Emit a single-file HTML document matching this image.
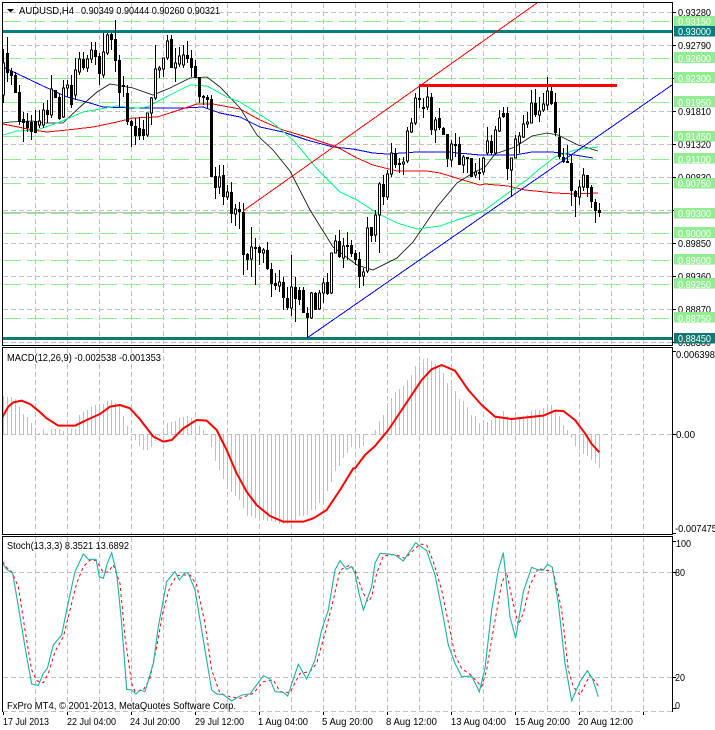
<!DOCTYPE html>
<html lang="en"><head><meta charset="utf-8"><title>AUDUSD,H4</title>
<style>
html,body{margin:0;padding:0;background:#fff;width:715px;height:730px;overflow:hidden}
svg{display:block}
text{font-family:"Liberation Sans",sans-serif;font-size:10.5px;fill:#000}
.w{fill:#fff}
.c{shape-rendering:crispEdges}
</style></head><body>
<svg width="715" height="730" viewBox="0 0 715 730" xmlns="http://www.w3.org/2000/svg">
<rect width="715" height="730" fill="#fff"/>
<!-- vertical grid -->
<path class="c" fill="none" stroke="#c0c0c0" stroke-dasharray="5 3" d="M35.5 3V345M67.5 3V345M99.5 3V345M131.5 3V345M163.5 3V345M195.5 3V345M227.5 3V345M259.5 3V345M291.5 3V345M323.5 3V345M355.5 3V345M387.5 3V345M419.5 3V345M451.5 3V345M483.5 3V345M515.5 3V345M547.5 3V345M579.5 3V345M611.5 3V345M643.5 3V345
M35.5 348V534M67.5 348V534M99.5 348V534M131.5 348V534M163.5 348V534M195.5 348V534M227.5 348V534M259.5 348V534M291.5 348V534M323.5 348V534M355.5 348V534M387.5 348V534M419.5 348V534M451.5 348V534M483.5 348V534M515.5 348V534M547.5 348V534M579.5 348V534M611.5 348V534M643.5 348V534
M35.5 537V712M67.5 537V712M99.5 537V712M131.5 537V712M163.5 537V712M195.5 537V712M227.5 537V712M259.5 537V712M291.5 537V712M323.5 537V712M355.5 537V712M387.5 537V712M419.5 537V712M451.5 537V712M483.5 537V712M515.5 537V712M547.5 537V712M579.5 537V712M611.5 537V712M643.5 537V712"/>
<!-- horizontal grid -->
<path class="c" fill="none" stroke="#c0c0c0" stroke-dasharray="5 3" d="M3 12.5H672M3 45.5H672M3 78.5H672M3 111.5H672M3 144.5H672M3 177.5H672M3 210.5H672M3 243.5H672M3 276.5H672M3 309.5H672M3 342.5H672M3 434.5H672M3 572.5H672M3 677.5H672M3 711.5H672"/>
<path class="c" fill="none" stroke="#bdbdbd" d="M3 212.5H672"/>
<!-- green levels -->
<path class="c" fill="none" stroke="#90ee90" stroke-dasharray="18 6" d="M3 21.5H672M3 58.5H672M3 78.5H672M3 102.5H672M3 136.5H672M3 159.5H672M3 183.5H672M3 213.5H672M3 233.5H672M3 260.5H672M3 284.5H672M3 318.5H672"/>
<!-- teal levels -->
<rect x="3" y="30" width="669" height="3" fill="#008080"/>
<rect x="3" y="337" width="669" height="3" fill="#0f7a72"/>
<!-- moving averages -->
<g fill="none">
<polyline class="c" stroke="#00f" stroke-width="1" points="3,67 20,75 43,86 67,97 90,103 103,107 133,108 183,108 203,107 220,113 240,117 260,127 283,132 307,140 333,147 353,149 373,153 387,154 417,152 447,152 480,155 515,155 532,152 552,152 575,155 593,158"/>
<polyline class="c" stroke="#f00" stroke-width="1" points="3,124 33,130 47,132 67,130 93,127 117,122 133,118 157,117 173,112 197,104 213,104 240,109 260,120 283,130 307,137 337,147 357,158 373,165 397,171 427,171 440,173 463,180 480,185 485,184 508,186 525,190 555,193 575,194 598,193"/>
<polyline stroke="#111" stroke-width=".85" points="3,123 10,122 33,121 43,123 63,123 80,107 97,92 110,84 133,88 153,95 170,88 190,78 207,77 220,87 240,108 257,135 273,150 290,171 310,210 333,247 357,265 373,270 397,258 413,242 437,207 457,183 473,173 485,167 495,154 515,147 532,136 547,133 558,135 578,145 598,151"/>
<polyline class="c" stroke="#00fa80" stroke-width="1" points="3,135 17,131 37,130 60,122 83,112 117,106 137,108 147,107 170,95 190,85 207,86 227,97 240,102 273,123 293,140 310,160 318,170 340,192 357,200 377,213 397,223 417,229 440,226 457,220 478,213 485,210 508,193 528,179 538,170 555,157 575,150 598,147"/>
</g>
<!-- candles -->
<path class="c" fill="none" stroke="#000" d="M3.5 49V103M7.5 37V82M11.5 68V85M15.5 72V93M19.5 85V125M23.5 112V142M27.5 113V132M31.5 115V140M35.5 110V133M39.5 110V128M43.5 103V128M47.5 100V123M51.5 75V118M55.5 90V98M59.5 93V120M63.5 80V118M67.5 80V97M71.5 75V108M75.5 58V100M79.5 52V75M83.5 52V70M87.5 55V72M91.5 42V63M95.5 42V65M99.5 53V85M103.5 33V78M107.5 33V55M111.5 33V50M115.5 20V72M119.5 55V107M123.5 76V97M127.5 85V125M131.5 120V147M135.5 118V145M139.5 117V140M143.5 120V140M147.5 113V137M151.5 97V125M155.5 45V100M159.5 66V78M163.5 58V77M167.5 35V60M171.5 35V68M175.5 48V82M179.5 47V67M183.5 45V68M187.5 41V63M191.5 50V77M195.5 60V78M199.5 77V103M203.5 95V105M207.5 95V108M211.5 95V177M215.5 167V199M219.5 165V194M223.5 165V205M227.5 185V200M231.5 182V223M235.5 204V226M239.5 202V229M243.5 203V275M247.5 253V270M251.5 227V277M255.5 238V285M259.5 246V265M263.5 248V263M267.5 242V270M271.5 263V297M275.5 273V290M279.5 270V292M283.5 277V310M287.5 287V310M291.5 255V316M295.5 277V322M299.5 287V305M303.5 287V313M307.5 307V338M311.5 292V319M315.5 292V310M319.5 290V310M323.5 278V303M327.5 273V295M331.5 253V294M335.5 235V253M339.5 230V258M343.5 238V268M347.5 232V260M351.5 240V257M355.5 250V265M359.5 252V288M363.5 268V286M367.5 217V273M371.5 227V242M375.5 210V242M379.5 182V253M383.5 175V205M387.5 170V200M391.5 143V177M395.5 148V168M399.5 158V173M403.5 157V175M407.5 127V163M411.5 118V133M415.5 93V125M419.5 85V108M423.5 98V118M427.5 85V110M431.5 93V135M435.5 117V143M439.5 108V130M443.5 127V135M447.5 134V167M451.5 140V167M455.5 133V157M459.5 137V165M463.5 155V173M467.5 157V173M471.5 158V177M475.5 163V178M479.5 158V180M483.5 157V175M487.5 127V155M491.5 135V155M495.5 126V155M499.5 110V132M503.5 107V118M507.5 107V180M511.5 158V197M515.5 135V158M519.5 132V153M523.5 115V138M527.5 112V128M531.5 90V123M535.5 89V117M539.5 97V122M543.5 93V112M547.5 77V110M551.5 86V105M555.5 93V136M559.5 128V159M563.5 148V163M567.5 145V163M571.5 155V206M575.5 190V217M579.5 180V205M583.5 168V191M587.5 175V197M591.5 185V208M595.5 199V223M599.5 203V217"/>
<path class="c" fill="#fff" stroke="#000" d="M2.5 63h2v32h-2zM38.5 121h2v4h-2zM42.5 110h2v15h-2zM50.5 89h2v26h-2zM62.5 88h2v29h-2zM66.5 85h2v3h-2zM74.5 70h2v25h-2zM78.5 59h2v13h-2zM86.5 59h2v9h-2zM90.5 50h2v9h-2zM102.5 52h2v23h-2zM106.5 35h2v18h-2zM146.5 113h2v22h-2zM150.5 98h2v15h-2zM154.5 69h2v29h-2zM158.5 68h2v2h-2zM162.5 58h2v11h-2zM166.5 41h2v17h-2zM174.5 63h2v5h-2zM178.5 56h2v8h-2zM182.5 55h2v10h-2zM218.5 177h2v10h-2zM226.5 192h2v5h-2zM234.5 209h2v5h-2zM250.5 247h2v12h-2zM262.5 250h2v3h-2zM278.5 282h2v4h-2zM290.5 287h2v21h-2zM310.5 293h2v25h-2zM318.5 293h2v16h-2zM322.5 283h2v10h-2zM330.5 253h2v40h-2zM334.5 241h2v12h-2zM342.5 246h2v12h-2zM362.5 272h2v4h-2zM366.5 228h2v43h-2zM374.5 215h2v20h-2zM378.5 184h2v31h-2zM386.5 174h2v23h-2zM390.5 153h2v21h-2zM402.5 162h2v2h-2zM406.5 131h2v30h-2zM410.5 123h2v9h-2zM414.5 98h2v25h-2zM426.5 97h2v10h-2zM434.5 120h2v10h-2zM450.5 144h2v16h-2zM462.5 157h2v8h-2zM474.5 172h2v3h-2zM482.5 158h2v14h-2zM486.5 141h2v12h-2zM494.5 130h2v23h-2zM498.5 118h2v13h-2zM510.5 158h2v12h-2zM514.5 139h2v19h-2zM518.5 136h2v7h-2zM522.5 124h2v13h-2zM526.5 122h2v2h-2zM530.5 103h2v20h-2zM538.5 111h2v4h-2zM542.5 104h2v6h-2zM546.5 91h2v14h-2zM578.5 187h2v10h-2zM582.5 175h2v12h-2z"/>
<path class="c" fill="none" stroke="#000" stroke-width="3" d="M7.5 53V73M11.5 71V76M15.5 75V93M19.5 92V122M23.5 119V123M27.5 121V128M31.5 122V132M35.5 121V133M47.5 110V115M55.5 90V98M59.5 97V119M71.5 85V105M83.5 59V68M95.5 50V57M99.5 56V74M111.5 34V40M115.5 39V61M119.5 60V93M123.5 85V87M127.5 93V122M131.5 121V126M135.5 126V136M139.5 128V136M143.5 129V136M171.5 39V68M187.5 55V59M191.5 58V68M195.5 66V78M199.5 77V97M203.5 96V98M207.5 97V100M211.5 99V177M215.5 176V188M223.5 175V197M231.5 192V214M239.5 209V212M243.5 212V255M247.5 254V260M255.5 247V249M259.5 247V253M267.5 250V269M271.5 269V284M275.5 283V286M283.5 282V298M287.5 298V308M295.5 287V299M299.5 290V300M303.5 290V313M307.5 313V318M315.5 293V310M327.5 282V294M339.5 241V257M347.5 245V247M351.5 245V254M355.5 253V260M359.5 259V277M371.5 227V236M383.5 184V197M395.5 153V165M399.5 163V165M419.5 98V100M423.5 107V109M431.5 97V130M439.5 118V128M443.5 128V135M447.5 134V159M455.5 144V146M459.5 144V165M467.5 157V159M471.5 158V177M479.5 172V174M491.5 141V153M503.5 113V117M507.5 113V169M535.5 103V115M551.5 91V104M555.5 102V133M559.5 137V157M563.5 157V162M567.5 161V163M571.5 163V191M575.5 191V197M587.5 175V188M591.5 187V202M595.5 202V211M599.5 210V213"/>
<!-- trend objects -->
<path class="c" fill="none" stroke="#f00" d="M243 211L537 3"/>
<path class="c" fill="none" stroke="#00f" d="M307 338L672 85"/>
<rect x="419" y="84" width="198" height="3" fill="#f00"/>
<!-- MACD histogram -->
<path class="c" fill="none" stroke="#c0c0c0" d="M3.5 434v-38M7.5 434v-37M11.5 434v-37M15.5 434v-35M19.5 434v-27M23.5 434v-20M27.5 434v-17M31.5 434v-11M35.5 434v-6M39.5 434v-1M43.5 434v-5M47.5 434v-1M51.5 434v-5M55.5 434v-5M59.5 434v-5M63.5 434v-3M67.5 434v-4M71.5 434v-5M75.5 434v-5M79.5 434v-19M83.5 434v-22M87.5 434v-24M91.5 434v-27M95.5 434v-29M99.5 434v-29M103.5 434v-30M107.5 434v-33M111.5 434v-34M115.5 434v-31M119.5 434v-28M123.5 434v-18M127.5 434v-8M135.5 434v6M139.5 434v12M143.5 434v16M147.5 434v16M151.5 434v13M155.5 434v7M159.5 434v2M163.5 434v-2M167.5 434v-11M171.5 434v-12M175.5 434v-13M179.5 434v-16M183.5 434v-17M187.5 434v-18M191.5 434v-16M195.5 434v-14M199.5 434v-8M203.5 434v-4M211.5 434v13M215.5 434v27M219.5 434v36M223.5 434v45M227.5 434v50M231.5 434v58M235.5 434v62M239.5 434v66M243.5 434v74M247.5 434v82M251.5 434v82M255.5 434v84M259.5 434v86M263.5 434v86M267.5 434v87M271.5 434v87M275.5 434v88M279.5 434v90M283.5 434v90M287.5 434v90M291.5 434v89M295.5 434v86M299.5 434v82M303.5 434v82M307.5 434v81M311.5 434v76M315.5 434v76M319.5 434v69M323.5 434v66M327.5 434v57M331.5 434v48M335.5 434v37M339.5 434v32M343.5 434v24M347.5 434v19M351.5 434v13M355.5 434v15M359.5 434v14M363.5 434v12M367.5 434v1M375.5 434v-4M379.5 434v-13M383.5 434v-19M387.5 434v-31M391.5 434v-36M395.5 434v-42M399.5 434v-45M403.5 434v-48M407.5 434v-54M411.5 434v-59M415.5 434v-68M419.5 434v-72M423.5 434v-75M427.5 434v-76M431.5 434v-73M435.5 434v-70M439.5 434v-66M443.5 434v-61M447.5 434v-51M451.5 434v-48M455.5 434v-43M459.5 434v-35M463.5 434v-33M467.5 434v-27M471.5 434v-19M475.5 434v-18M479.5 434v-11M483.5 434v-12M487.5 434v-12M491.5 434v-14M495.5 434v-18M499.5 434v-18M503.5 434v-23M507.5 434v-18M511.5 434v-14M515.5 434v-14M519.5 434v-16M523.5 434v-18M527.5 434v-19M531.5 434v-23M535.5 434v-24M539.5 434v-24M543.5 434v-26M547.5 434v-28M551.5 434v-29M555.5 434v-23M559.5 434v-18M563.5 434v-9M567.5 434v-4M571.5 434v4M575.5 434v12M579.5 434v17M583.5 434v20M587.5 434v22M591.5 434v26M595.5 434v29M599.5 434v34"/>
<!-- MACD signal -->
<g transform="translate(0,340) scale(.33333)" fill="none" stroke="#f00" stroke-width="6" stroke-linejoin="round">
<polyline points="8,230 25,200 40,187 65,182 90,192 115,212 140,235 175,257 225,257 260,240 300,222 330,200 360,195 390,205 420,238 460,290 490,305 515,300 550,265 590,240 620,242 650,270 680,330 710,400 740,455 770,495 810,528 850,545 910,545 940,535 980,510 1020,450 1060,385 1065,385 1095,345 1125,318 1165,270 1195,225 1225,180 1265,120 1295,88 1325,75 1365,92 1405,150 1445,195 1485,230 1535,237 1580,232 1630,227 1665,212 1690,213 1725,240 1755,280 1775,312 1798,337"/>
</g>
<!-- Stochastic signal -->
<g transform="translate(0,530) scale(.33333)" fill="none">
<polyline stroke="#f00" stroke-width="3" stroke-dasharray="9 9" points="8,95 20,113 35,125 55,170 75,300 95,420 110,452 130,458 145,430 165,365 190,320 210,240 230,160 250,110 270,90 290,92 310,128 325,125 340,105 360,160 375,320 395,460 405,485 430,480 450,445 470,350 490,240 510,170 530,137 550,135 570,135 590,165 615,280 635,420 660,490 690,500 720,505 760,490 790,455 820,450 840,485 870,488 900,430 930,425 950,400 975,310 1000,210 1020,120 1050,105 1065,120 1090,190 1105,215 1115,200 1130,130 1150,78 1185,73 1215,85 1260,42 1280,45 1300,95 1325,180 1350,300 1365,375 1385,415 1415,437 1445,470 1460,420 1480,300 1505,160 1520,127 1535,200 1555,285 1570,250 1590,165 1615,115 1635,120 1660,125 1685,240 1705,420 1720,470 1740,495 1770,435 1795,467"/>
<polyline stroke="#20b2aa" stroke-width="3.4" points="8,100 20,118 38,130 50,200 65,290 80,380 95,462 115,466 130,430 142,415 160,345 185,315 200,240 225,125 250,72 265,88 288,88 298,140 310,145 322,100 335,68 350,130 365,280 380,478 395,480 408,492 420,480 435,485 460,400 475,290 500,155 525,125 538,150 555,128 565,130 585,180 610,330 635,480 650,492 670,494 695,513 725,495 750,492 790,437 810,447 825,485 850,487 863,498 895,403 920,447 945,390 965,300 985,240 1005,120 1020,92 1040,118 1055,110 1065,130 1077,190 1090,240 1115,170 1125,100 1140,70 1165,72 1185,75 1210,93 1247,38 1280,62 1305,135 1325,235 1345,345 1365,400 1385,440 1415,438 1438,485 1455,415 1475,240 1495,120 1510,68 1530,260 1547,325 1570,185 1595,112 1615,120 1630,120 1643,103 1657,112 1675,220 1695,400 1715,512 1740,455 1762,422 1777,445 1795,500"/>
</g>
<!-- frames -->
<path class="c" fill="none" stroke="#000" d="M2.5 2V345M2 2.5H672.5V345M2 345.5H673M2.5 347V534M2 347.5H672.5V534M2 534.5H673M2.5 536V712M2 536.5H672.5V712M3.5 712V715M67.5 712V715M131.5 712V715M195.5 712V715M259.5 712V715M323.5 712V715M387.5 712V715M451.5 712V715M515.5 712V715M579.5 712V715M643.5 712V715
M673 12.5h3M673 45.5h3M673 78.5h3M673 111.5h3M673 144.5h3M673 177.5h3M673 210.5h3M673 243.5h3M673 276.5h3M673 309.5h3M673 342.5h3M673 351.5h3M673 434.5h3M673 533.5h3M673 541.5h3M673 572.5h3M673 677.5h3M673 708.5h3"/>
<!-- header -->
<path d="M7 9h7l-3.500 3.500z" fill="#000"/>
<text x="19" y="14" textLength="55" lengthAdjust="spacingAndGlyphs">AUDUSD,H4</text>
<text x="81" y="14" textLength="139" lengthAdjust="spacingAndGlyphs">0.90349 0.90444 0.90260 0.90321</text>
<text x="7" y="361" textLength="154" lengthAdjust="spacingAndGlyphs">MACD(12,26,9) -0.002538 -0.001353</text>
<text x="7" y="549" textLength="122" lengthAdjust="spacingAndGlyphs">Stoch(13,3,3) 8.3521 13.6892</text>
<text x="7" y="709" textLength="229" lengthAdjust="spacingAndGlyphs">FxPro MT4, © 2001-2013, MetaQuotes Software Corp.</text>
<!-- price axis -->
<g>
<text x="678" y="16" textLength="33" lengthAdjust="spacingAndGlyphs">0.93280</text>
<text x="678" y="49" textLength="33" lengthAdjust="spacingAndGlyphs">0.92790</text>
<text x="678" y="115" textLength="33" lengthAdjust="spacingAndGlyphs">0.91810</text>
<text x="678" y="148" textLength="33" lengthAdjust="spacingAndGlyphs">0.91320</text>
<text x="678" y="181" textLength="33" lengthAdjust="spacingAndGlyphs">0.90830</text>
<text x="678" y="247" textLength="33" lengthAdjust="spacingAndGlyphs">0.89850</text>
<text x="678" y="280" textLength="33" lengthAdjust="spacingAndGlyphs">0.89360</text>
<text x="678" y="313" textLength="33" lengthAdjust="spacingAndGlyphs">0.88870</text>
<text x="678" y="346" textLength="33" lengthAdjust="spacingAndGlyphs">0.88380</text>
</g>
<g fill="#90ee90">
<rect x="674" y="16" width="41" height="10.500"/><rect x="674" y="52" width="41" height="11"/><rect x="674" y="72" width="41" height="11"/><rect x="674" y="96" width="41" height="11"/><rect x="674" y="131" width="41" height="10.500"/><rect x="674" y="153" width="41" height="10.500"/><rect x="674" y="178" width="41" height="10.500"/><rect x="674" y="208" width="41" height="10.500"/><rect x="674" y="227" width="41" height="11"/><rect x="674" y="254" width="41" height="10.500"/><rect x="674" y="278" width="41" height="10.500"/><rect x="674" y="312" width="41" height="10.500"/>
</g>
<rect x="674" y="26" width="41" height="10.500" fill="#008080"/>
<rect x="674" y="333" width="41" height="10.500" fill="#0f7a72"/>
<g class="w">
<text class="w" x="678" y="25" textLength="33" lengthAdjust="spacingAndGlyphs">0.93150</text>
<text class="w" x="678" y="35" textLength="33" lengthAdjust="spacingAndGlyphs">0.93000</text>
<text class="w" x="678" y="62" textLength="33" lengthAdjust="spacingAndGlyphs">0.92600</text>
<text class="w" x="678" y="82" textLength="33" lengthAdjust="spacingAndGlyphs">0.92300</text>
<text class="w" x="678" y="106" textLength="33" lengthAdjust="spacingAndGlyphs">0.91950</text>
<text class="w" x="678" y="140" textLength="33" lengthAdjust="spacingAndGlyphs">0.91450</text>
<text class="w" x="678" y="163" textLength="33" lengthAdjust="spacingAndGlyphs">0.91100</text>
<text class="w" x="678" y="187" textLength="33" lengthAdjust="spacingAndGlyphs">0.90750</text>
<text class="w" x="678" y="217" textLength="33" lengthAdjust="spacingAndGlyphs">0.90300</text>
<text class="w" x="678" y="237" textLength="33" lengthAdjust="spacingAndGlyphs">0.90000</text>
<text class="w" x="678" y="264" textLength="33" lengthAdjust="spacingAndGlyphs">0.89600</text>
<text class="w" x="678" y="288" textLength="33" lengthAdjust="spacingAndGlyphs">0.89250</text>
<text class="w" x="678" y="322" textLength="33" lengthAdjust="spacingAndGlyphs">0.88750</text>
<text class="w" x="678" y="342" textLength="33" lengthAdjust="spacingAndGlyphs">0.88450</text>
</g>
<!-- indicator axes -->
<text x="676" y="358" textLength="39" lengthAdjust="spacingAndGlyphs">0.006398</text>
<text x="676" y="438" textLength="19" lengthAdjust="spacingAndGlyphs">0.00</text>
<text x="675" y="532" textLength="42" lengthAdjust="spacingAndGlyphs">-0.007475</text>
<text x="676" y="547" textLength="15" lengthAdjust="spacingAndGlyphs">100</text>
<text x="675" y="576" textLength="10" lengthAdjust="spacingAndGlyphs">80</text>
<text x="675" y="681" textLength="10" lengthAdjust="spacingAndGlyphs">20</text>
<text x="675" y="709" textLength="5" lengthAdjust="spacingAndGlyphs">0</text>
<!-- time axis -->
<text x="3" y="725" textLength="46" lengthAdjust="spacingAndGlyphs">17 Jul 2013</text>
<text x="67" y="725" textLength="49" lengthAdjust="spacingAndGlyphs">22 Jul 04:00</text>
<text x="130" y="725" textLength="50" lengthAdjust="spacingAndGlyphs">24 Jul 20:00</text>
<text x="195" y="725" textLength="49" lengthAdjust="spacingAndGlyphs">29 Jul 12:00</text>
<text x="258" y="725" textLength="50" lengthAdjust="spacingAndGlyphs">1 Aug 04:00</text>
<text x="322" y="725" textLength="51" lengthAdjust="spacingAndGlyphs">5 Aug 20:00</text>
<text x="386" y="725" textLength="51" lengthAdjust="spacingAndGlyphs">8 Aug 12:00</text>
<text x="451" y="725" textLength="55" lengthAdjust="spacingAndGlyphs">13 Aug 04:00</text>
<text x="515" y="725" textLength="55" lengthAdjust="spacingAndGlyphs">15 Aug 20:00</text>
<text x="578" y="725" textLength="55" lengthAdjust="spacingAndGlyphs">20 Aug 12:00</text>
</svg>
</body></html>
